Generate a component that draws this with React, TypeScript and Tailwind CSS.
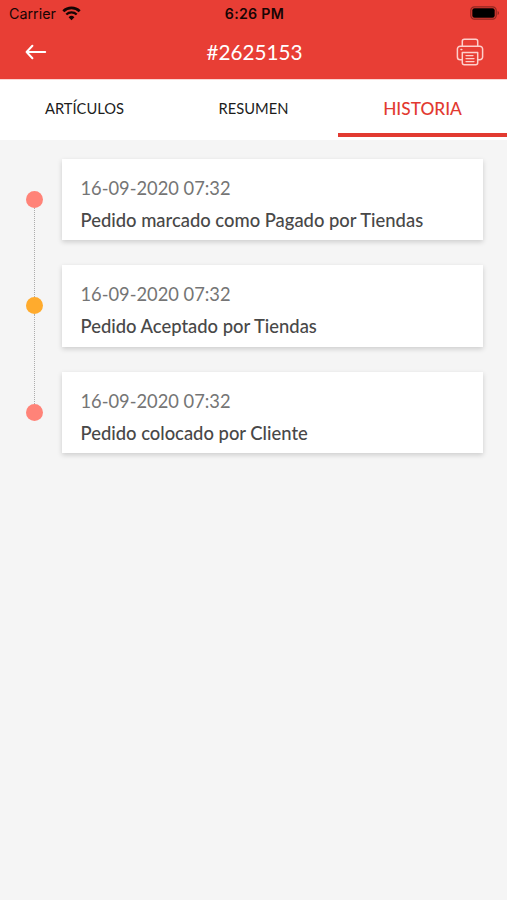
import { useState } from "react";
import clsx from "clsx";

type OrderEvent = {
  id: number;
  date: string;
  text: string;
  dot: string;
};

const tabs = ["ARTÍCULOS", "RESUMEN", "HISTORIA"];

const events: OrderEvent[] = [
  {
    id: 1,
    date: "16-09-2020 07:32",
    text: "Pedido marcado como Pagado por Tiendas",
    dot: "bg-[#ff8378]",
  },
  {
    id: 2,
    date: "16-09-2020 07:32",
    text: "Pedido Aceptado por Tiendas",
    dot: "bg-[#ffab2d]",
  },
  {
    id: 3,
    date: "16-09-2020 07:32",
    text: "Pedido colocado por Cliente",
    dot: "bg-[#ff8378]",
  },
];

const WifiIcon = () => (
  <svg width="19" height="15" viewBox="0 0 19 15" fill="none" className="mb-0.5">
    <path d="M1.3 5.2a11.8 11.8 0 0 1 16.4 0" stroke="#160504" strokeWidth="2.7" />
    <path d="M4.3 8.5a7.5 7.5 0 0 1 10.4 0" stroke="#160504" strokeWidth="2.3" />
    <path d="M9.5 14.2 6.6 11.3a4.1 4.1 0 0 1 5.8 0z" fill="#160504" />
  </svg>
);

const BatteryIcon = () => (
  <svg width="30" height="14" viewBox="0 0 30 14" fill="none" className="mb-0.5">
    <rect x="0.8" y="0.8" width="25.4" height="12.4" rx="3.6" stroke="#8f2721" strokeWidth="1.2" />
    <rect x="2.3" y="2.3" width="22.4" height="9.4" rx="2.2" fill="#000" />
    <path d="M27.6 4.9c1.9.7 1.9 3.5 0 4.2z" fill="#8f2721" />
  </svg>
);

const BackIcon = () => (
  <svg
    width="22"
    height="16"
    viewBox="0 0 22 16"
    fill="none"
    stroke="#fff"
    strokeWidth="2"
    strokeLinejoin="round"
    strokeLinecap="round"
  >
    <path d="M1.6 8h18.6M7.4 1.8 1.6 8l5.8 6.2" />
  </svg>
);

const PrinterIcon = () => (
  <svg
    width="28"
    height="28"
    viewBox="0 0 28 28"
    fill="none"
    stroke="#fdcfcb"
    strokeWidth="1.5"
    strokeLinejoin="round"
    strokeLinecap="round"
  >
    <path d="M6.3 8.2V3.2a2 2 0 0 1 2-2h11.4a2 2 0 0 1 2 2v5" />
    <path d="M6.3 21.7H4.2a2.8 2.8 0 0 1-2.8-2.8V11a2.8 2.8 0 0 1 2.8-2.8h19.6a2.8 2.8 0 0 1 2.8 2.8v7.9a2.8 2.8 0 0 1-2.8 2.8h-2.1" />
    <path d="M6.3 14.4h15.4v10.4a2 2 0 0 1-2 2H8.3a2 2 0 0 1-2-2z" />
    <path d="M10 17.6h7M10 20.6h8M10 23.6h8" strokeWidth="1.3" />
    <path d="M5 11.4h.8" />
  </svg>
);

const StatusBar = () => (
  <div className="grid h-7 grid-cols-3 items-center pr-[7px] pl-[9px] font-['Inter',sans-serif] text-[#160504]">
    <div className="flex items-center gap-1.5">
      <span className="text-[14.3px] leading-none">Carrier</span>
      <WifiIcon />
    </div>
    <span className="text-center text-[14.2px] leading-none font-semibold tracking-[0.3px]">
      6:26 PM
    </span>
    <div className="flex justify-end">
      <BatteryIcon />
    </div>
  </div>
);

const EventRow = ({ event, last }: { event: OrderEvent; last: boolean }) => (
  <li className="flex">
    <div className="flex w-[17px] flex-col items-center pt-8">
      <span className={clsx("size-[17px] shrink-0 rounded-full", event.dot)} />
      {!last && <span className="-mb-8 flex-1 border-l border-dotted border-[#acacac]" />}
    </div>
    <div className={clsx("ml-[19px] flex-1", !last && "pb-[25px]")}>
      <div className="h-[81.3px] bg-white px-[18.5px] pt-[17px] shadow-[0_2px_5px_rgba(0,0,0,0.17)]">
        <p className="text-[18.3px] leading-6 text-[#757575]">{event.date}</p>
        <p className="mt-2 text-[18.4px] leading-6 font-medium text-[#484848]">{event.text}</p>
      </div>
    </div>
  </li>
);

const App = () => {
  const [active, setActive] = useState<number>(2);

  return (
    <div className="min-h-screen bg-[#f5f5f5] font-['Lato',sans-serif]">
      <header className="h-[79px] bg-[#e83e35]">
        <StatusBar />
        <div className="flex h-12 items-center justify-between pr-[23px] pl-[25px]">
          <button className="flex w-7 justify-start">
            <BackIcon />
          </button>
          <h1 className="text-[20.7px] leading-none text-white">#2625153</h1>
          <button>
            <PrinterIcon />
          </button>
        </div>
      </header>
      <nav className="grid h-[61px] grid-cols-3 border-t border-[#fbd5d2] bg-white pb-[3px]">
        {tabs.map((tab, index) => (
          <button
            key={tab}
            onClick={() => setActive(index)}
            className={clsx(
              "border-b-4 pt-1",
              index === active
                ? "border-[#e23a31] text-[17.3px] font-medium text-[#e23a31]"
                : "border-transparent text-[14.7px] text-[#1c1c1c]"
            )}
          >
            {tab}
          </button>
        ))}
      </nav>
      <ul className="pt-[19px] pr-6 pl-[26px]">
        {events.map((event, index) => (
          <EventRow key={event.id} event={event} last={index === events.length - 1} />
        ))}
      </ul>
    </div>
  );
};

export default App;
